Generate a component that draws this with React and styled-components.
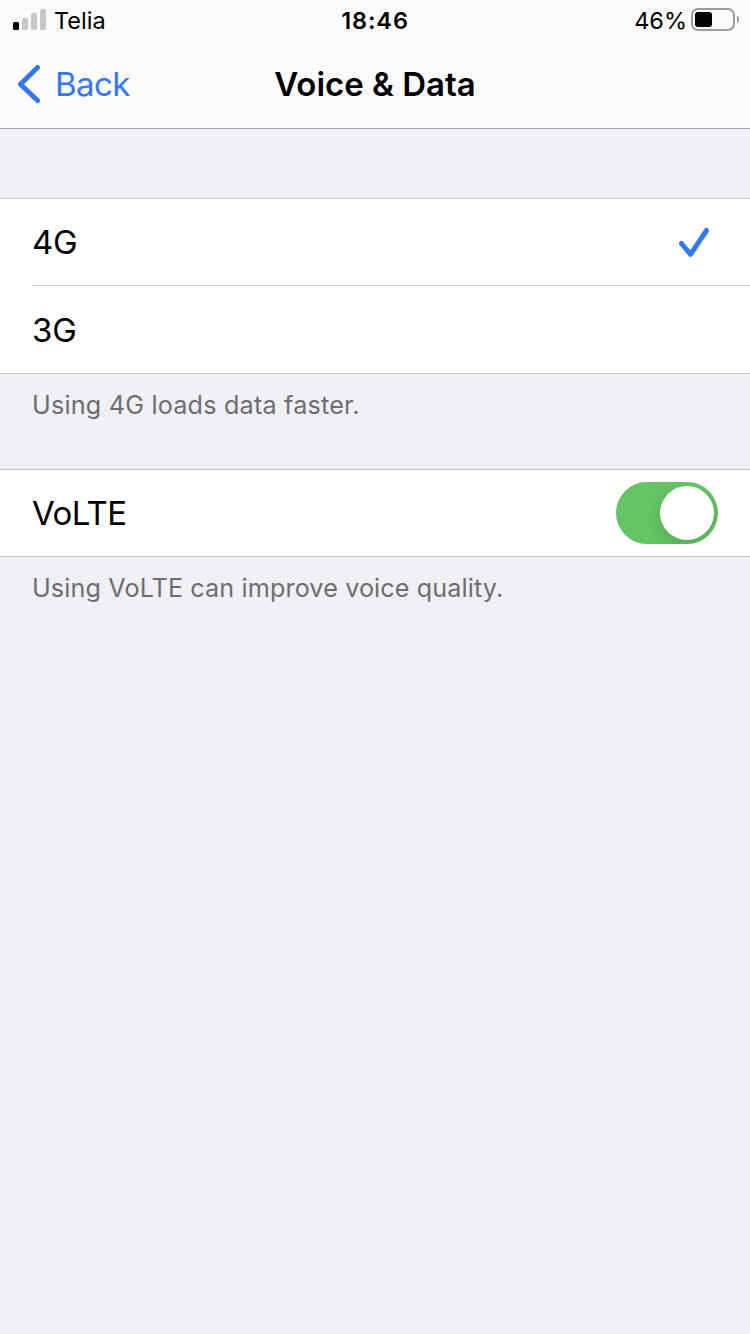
import React, { useState } from "react";
import styled, { createGlobalStyle } from "styled-components";

const GlobalStyle = createGlobalStyle`
  * {
    box-sizing: border-box;
  }
  body {
    margin: 0;
    background: #f1f0f6;
    font-family: Inter, "Liberation Sans", sans-serif;
    color: #000;
  }
`;

const Screen = styled.div`
  width: 750px;
  min-height: 1334px;
  background: #f1f0f6;
`;

const Header = styled.header`
  height: 129px;
  background: #fbfbfb;
  border-bottom: 1px solid #a9a9ac;
`;

const StatusBar = styled.div`
  display: grid;
  grid-template-columns: 1fr auto 1fr;
  align-items: center;
  height: 40px;
  padding: 0 11px;
  font-size: 23.5px;
  line-height: 40px;
`;

const StatusSide = styled.div`
  display: flex;
  align-items: center;
  justify-content: ${(props) => (props.$end ? "flex-end" : "flex-start")};
  gap: ${(props) => (props.$end ? "4px" : "8px")};
  padding-left: ${(props) => (props.$end ? "0" : "2px")};
  svg {
    margin-bottom: 2px;
  }
`;

const StatusText = styled.span`
  letter-spacing: ${(props) => props.$spacing || "0"};
  font-weight: ${(props) => (props.$strong ? 600 : 400)};
  padding-top: 1px;
`;

const NavBar = styled.nav`
  display: grid;
  grid-template-columns: 1fr auto 1fr;
  align-items: center;
  height: 88px;
  padding: 0 17px;
`;

const BackButton = styled.button`
  display: flex;
  align-items: center;
  gap: 14px;
  padding: 0;
  border: none;
  background: none;
  color: #3478f6;
  font-family: inherit;
  font-size: 33px;
  line-height: 40px;
  letter-spacing: -0.6px;
`;

const Title = styled.h1`
  margin: 0;
  font-size: 33px;
  line-height: 40px;
  font-weight: 600;
  letter-spacing: 0;
`;

const Section = styled.section`
  padding-top: ${(props) => props.$top};
`;

const Group = styled.div`
  background: #fff;
  border-top: 1px solid #c6c6c8;
  border-bottom: 1px solid #c6c6c8;
`;

const Row = styled.div`
  display: flex;
  align-items: center;
  justify-content: space-between;
  height: ${(props) => props.$height};
  margin-left: 32px;
  padding-right: ${(props) => props.$right || "32px"};
  font-size: 33px;
  line-height: 40px;
  border-bottom: ${(props) => (props.$divider ? "1px solid #c6c6c8" : "none")};
`;

const Label = styled.span`
  letter-spacing: ${(props) => props.$spacing || "-0.6px"};
`;

const Footnote = styled.p`
  margin: 0;
  padding: 15px 32px 0;
  font-size: 25.2px;
  line-height: 32px;
  letter-spacing: ${(props) => props.$spacing || "0"};
  color: #6d6d72;
`;

const Switch = styled.button`
  display: flex;
  justify-content: ${(props) => (props.$on ? "flex-end" : "flex-start")};
  width: 102px;
  height: 62px;
  padding: 4px;
  border: none;
  border-radius: 31px;
  overflow: hidden;
  background: ${(props) => (props.$on ? "#65c466" : "#e9e9ea")};
`;

const Thumb = styled.span`
  width: 54px;
  height: 54px;
  border-radius: 50%;
  background: #fff;
  box-shadow: 0 6px 16px rgba(0, 0, 0, 0.15);
`;

const Signal = () => (
  <svg width="33" height="22" viewBox="0 0 33 22">
    <rect x="0" y="13" width="6" height="8" rx="1.5" fill="#000" />
    <rect x="9" y="9" width="6" height="12" rx="1.5" fill="#c8c8c8" />
    <rect x="18" y="4" width="6" height="17" rx="1.5" fill="#c8c8c8" />
    <rect x="27" y="0" width="6" height="21" rx="1.5" fill="#c8c8c8" />
  </svg>
);

const Battery = () => (
  <svg width="48" height="24" viewBox="0 0 48 24">
    <rect x="1" y="1" width="42" height="21" rx="6" fill="none" stroke="#9c9c9c" strokeWidth="2" />
    <rect x="4" y="4" width="17" height="15" rx="3" fill="#000" />
    <path d="M46 7.5c1.2.6 2 2.1 2 4s-.8 3.4-2 4z" fill="#9c9c9c" />
  </svg>
);

const Chevron = () => (
  <svg width="24" height="40" viewBox="0 0 24 40">
    <path
      d="M20.5 3.5 3.5 20.2l17 16.3"
      fill="none"
      stroke="currentColor"
      strokeWidth="5"
      strokeLinecap="round"
      strokeLinejoin="round"
    />
  </svg>
);

const Check = () => (
  <svg width="32" height="32" viewBox="0 0 32 32">
    <path
      d="M3.5 17.5 12.5 28.3 28.5 4.5"
      fill="none"
      stroke="#3478f6"
      strokeWidth="5"
      strokeLinecap="round"
      strokeLinejoin="round"
    />
  </svg>
);

export default function App() {
  const [network, setNetwork] = useState("4G");
  const [volte, setVolte] = useState(true);

  return (
    <>
      <GlobalStyle />
      <Screen>
        <Header>
          <StatusBar>
            <StatusSide>
              <Signal />
              <StatusText>Telia</StatusText>
            </StatusSide>
            <StatusText $strong $spacing="0.9px">
              18:46
            </StatusText>
            <StatusSide $end>
              <StatusText>46%</StatusText>
              <Battery />
            </StatusSide>
          </StatusBar>
          <NavBar>
            <BackButton>
              <Chevron />
              Back
            </BackButton>
            <Title>Voice &amp; Data</Title>
          </NavBar>
        </Header>

        <Section $top="69px">
          <Group>
            <Row $height="87px" $right="40px" $divider onClick={() => setNetwork("4G")}>
              <Label $spacing="-0.2px">4G</Label>
              {network === "4G" && <Check />}
            </Row>
            <Row $height="87px" $right="40px" onClick={() => setNetwork("3G")}>
              <Label $spacing="-0.2px">3G</Label>
              {network === "3G" && <Check />}
            </Row>
          </Group>
          <Footnote $spacing="0.19px">Using 4G loads data faster.</Footnote>
        </Section>

        <Section $top="48px">
          <Group>
            <Row $height="86px">
              <Label>VoLTE</Label>
              <Switch $on={volte} onClick={() => setVolte(!volte)}>
                <Thumb />
              </Switch>
            </Row>
          </Group>
          <Footnote $spacing="0.11px">Using VoLTE can improve voice quality.</Footnote>
        </Section>
      </Screen>
    </>
  );
}
